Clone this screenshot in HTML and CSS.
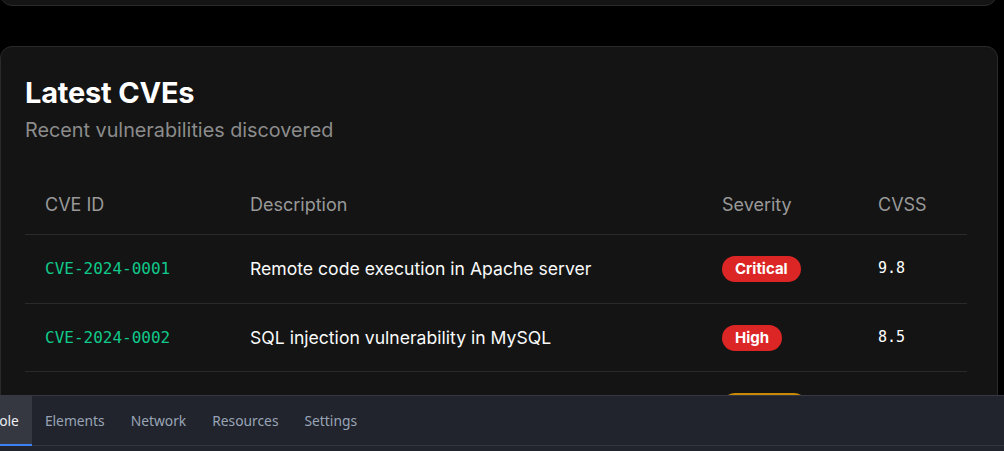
FILE: index.html
```html
<!DOCTYPE html>
<html lang="en">
<head>
<meta charset="utf-8">
<title>Latest CVEs</title>
<link rel="stylesheet" href="styles.css">
</head>
<body>
<main class="viewport">
  <div class="page">
    <div class="card card-prev"></div>
    <section class="card card-cves">
      <h2 class="card-title">Latest CVEs</h2>
      <p class="card-subtitle">Recent vulnerabilities discovered</p>
      <table class="cve-table">
        <thead>
          <tr>
            <th class="col-id">CVE ID</th>
            <th class="col-desc">Description</th>
            <th class="col-sev">Severity</th>
            <th class="col-score">CVSS</th>
          </tr>
        </thead>
        <tbody>
          <tr>
            <td class="cve-id">CVE-2024-0001</td>
            <td>Remote code execution in Apache server</td>
            <td><span class="badge badge-critical">Critical</span></td>
            <td class="score">9.8</td>
          </tr>
          <tr>
            <td class="cve-id">CVE-2024-0002</td>
            <td>SQL injection vulnerability in MySQL</td>
            <td><span class="badge badge-high">High</span></td>
            <td class="score">8.5</td>
          </tr>
          <tr>
            <td class="cve-id">CVE-2024-0003</td>
            <td>Cross-site scripting in WordPress plugin</td>
            <td><span class="badge badge-medium">Medium</span></td>
            <td class="score">6.1</td>
          </tr>
        </tbody>
      </table>
    </section>
  </div>
</main>
<nav class="devtools">
  <div class="tabs">
    <div class="tab tab-active">Console</div>
    <div class="tab">Elements</div>
    <div class="tab">Network</div>
    <div class="tab">Resources</div>
    <div class="tab">Settings</div>
  </div>
</nav>
</body>
</html>
```
FILE: styles.css
```css
html, body {
  margin: 0;
  padding: 0;
  background: #000;
  height: 100%;
  overflow: hidden;
}
body {
  font-family: Inter, "Noto Sans", sans-serif;
  color: #fff;
  display: flex;
  flex-direction: column;
}
.viewport {
  flex: 1;
  min-height: 0;
  overflow: hidden;
}
.page {
  width: 998px;
}
.card {
  background: #141414;
  border: 1px solid #2a2a2a;
  border-radius: 12px;
  box-sizing: border-box;
}
.card-prev {
  height: 40px;
  margin-top: -34px;
  width: 997px;
}
.card-cves {
  margin-top: 40px;
  padding: 29px 30px 24px 24px;
}
.card-title {
  margin: 0;
  font-size: 29px;
  line-height: 34px;
  font-weight: 700;
  letter-spacing: -0.2px;
}
.card-subtitle {
  margin: 6px 0 0;
  font-size: 19.8px;
  line-height: 28px;
  color: #8c8c8c;
}
.cve-table {
  margin-top: 32px;
  width: 100%;
  border-collapse: collapse;
}
.cve-table th {
  text-align: left;
  font-weight: 400;
  font-size: 18px;
  line-height: 22px;
  color: #999;
  padding: 18px 20px;
  border-bottom: 1px solid #2a2a2a;
}
.cve-table td {
  font-size: 17.6px;
  line-height: 27.5px;
  padding: 20px 20px;
  border-bottom: 1px solid #2a2a2a;
  color: #fafafa;
}
.col-id { width: 165px; }
.col-sev { width: 116px; }
.col-score { width: 69px; }
.cve-table td.cve-id {
  font-family: "DejaVu Sans Mono", "Liberation Mono", monospace;
  font-size: 16px;
  color: #10c98a;
}
.cve-table td.score {
  font-family: "DejaVu Sans Mono", "Liberation Mono", monospace;
  font-size: 15px;
  color: #fff;
}
.badge {
  display: inline-block;
  font-size: 15px;
  font-weight: 700;
  line-height: 26px;
  padding: 0 13px;
  margin-top: 1px;
  border-radius: 999px;
  color: #fff;
  vertical-align: top;
}
.badge-critical, .badge-high { background: #dc2626; }
.badge-medium { background: #ca8a04; }

.devtools {
  flex: 0 0 56px;
  box-sizing: border-box;
  background: #21242c;
  border-top: 1px solid #363941;
  padding-bottom: 5px;
}
.tabs {
  display: flex;
  height: 50px;
  box-sizing: border-box;
  border-bottom: 1px solid #33363e;
}
.tab {
  display: flex;
  align-items: center;
  padding: 0 13px;
  font-family: "Noto Sans", "Open Sans", sans-serif;
  font-size: 13.8px;
  color: #9aa4b7;
}
.tab-active {
  margin-left: -46px;
  margin-bottom: -1px;
  background: #353841;
  color: #eceef3;
  border-bottom: 2px solid #3b82f6;
}
```
